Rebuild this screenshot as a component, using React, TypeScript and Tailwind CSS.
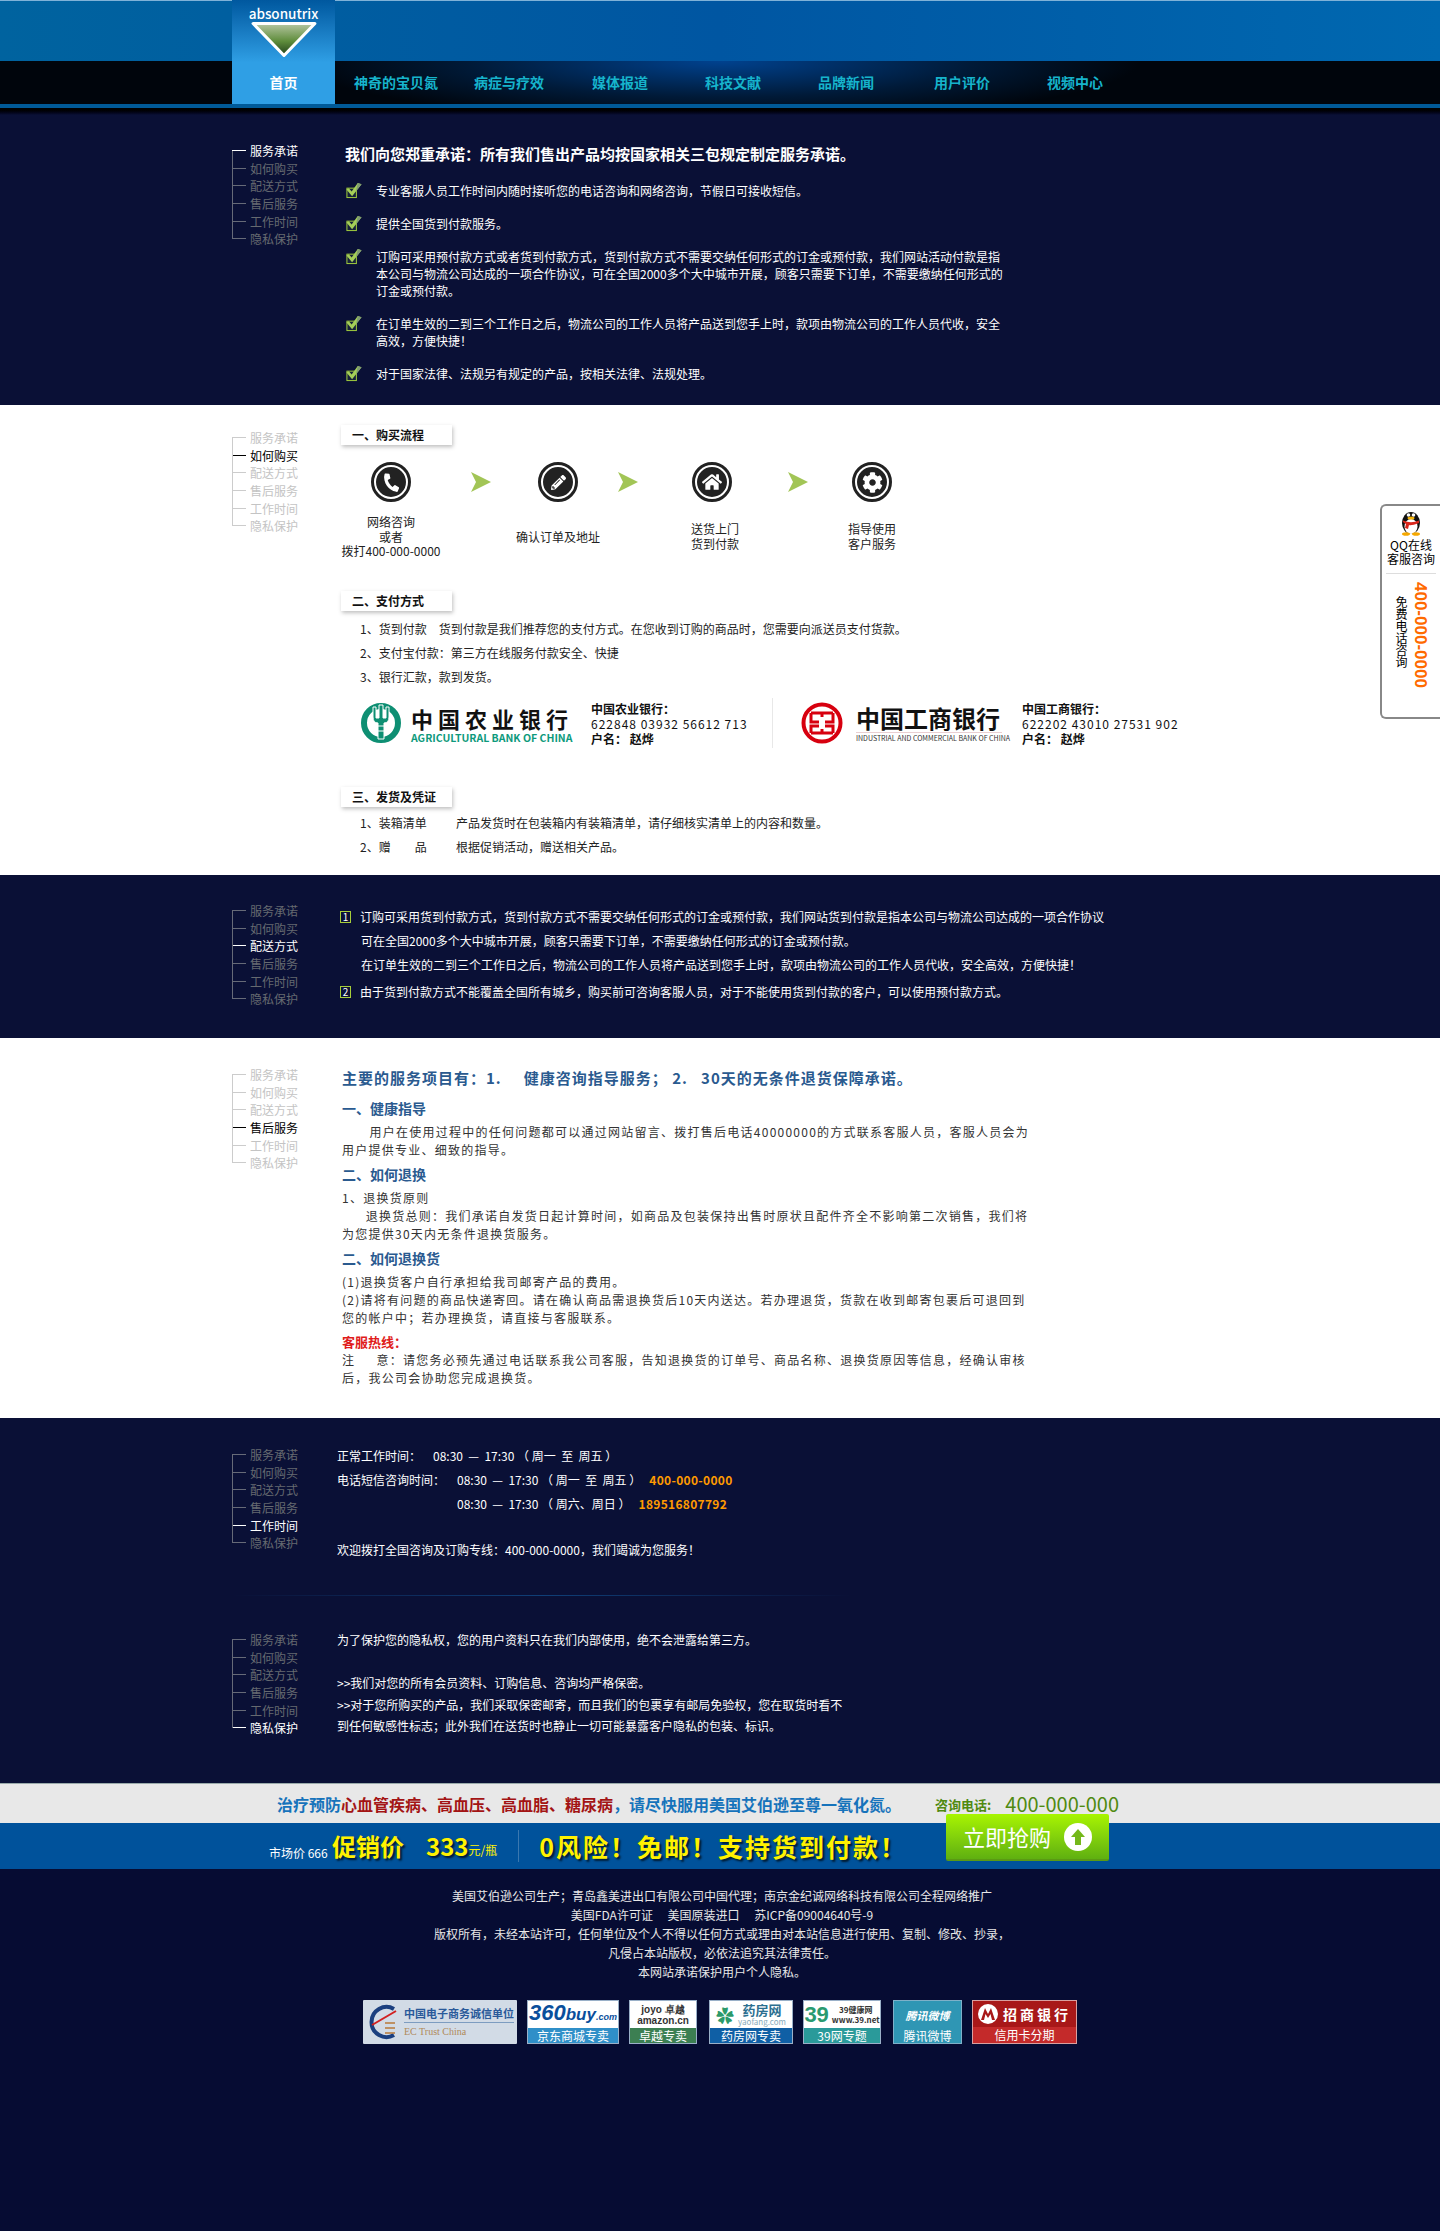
import React from "react";
import { FaCog, FaHome, FaPencilAlt, FaPhone } from "react-icons/fa";

const FONT = "font-['Noto_Sans_CJK_SC','Liberation_Sans',sans-serif]";
const sideItems = ["服务承诺", "如何购买", "配送方式", "售后服务", "工作时间", "隐私保护"];

function SideNav({ active, dark }: { active: number; dark: boolean }) {
  return (
    <div className="relative w-[105px] shrink-0 self-start">
      <span className={`absolute left-0 top-[9px] bottom-[9px] w-px ${dark ? "bg-[#666a78]" : "bg-[#cccccc]"}`} />
      {sideItems.map((t, i) => {
        const on = i === active;
        const color = on ? (dark ? "text-white" : "text-black") : dark ? "text-[#666a70]" : "text-[#c4c4c4]";
        const line = on ? (dark ? "bg-white" : "bg-black") : dark ? "bg-[#666a78]" : "bg-[#cccccc]";
        return (
          <div key={t} className="flex h-[17.6px] items-center">
            <span className={`h-px w-[14px] ${line}`} />
            <span className={`ml-[4px] text-[12px] leading-[17px] ${color}`}>{t}</span>
          </div>
        );
      })}
    </div>
  );
}

function Check() {
  return (
    <svg width="18" height="17" viewBox="0 0 18 18" className="shrink-0">
      <rect x="1.5" y="6.5" width="10" height="10" fill="#16213a" stroke="#a8d63d" />
      <path d="M1 8 L3.5 6.5 L6.5 10 L13 1 L17 2.5 L7 15 Z" fill="#a5cf58" />
      <path d="M13 1 L17 2.5 L11 10 Z" fill="#7f9a73" />
    </svg>
  );
}

function Promise({ lines, className }: { lines: string[]; className: string }) {
  return (
    <div className={`flex gap-[13px] ${className}`}>
      <Check />
      <div className="text-[12px] leading-[17px] text-white">
        {lines.map((l) => (
          <div key={l} className="whitespace-nowrap">{l}</div>
        ))}
      </div>
    </div>
  );
}

function TitleBox({ text, className }: { text: string; className: string }) {
  return (
    <div className={`ml-[1px] flex h-[20px] w-[111px] items-center bg-white pl-[11px] text-[12px] font-bold text-[#111] shadow-[1px_2px_4px_rgba(0,0,0,0.25)] ${className}`}>
      {text}
    </div>
  );
}

function Circle({ icon }: { icon: React.ReactNode }) {
  return (
    <div className="flex h-[40px] w-[40px] shrink-0 items-center justify-center rounded-full border-[2px] border-[#222] bg-[#222] text-white outline-[2px] -outline-offset-[5px] outline-white">
      {icon}
    </div>
  );
}

function Arrow() {
  return (
    <svg width="20" height="20" viewBox="0 0 20 20" className="shrink-0">
      <path d="M0 0 L20 10 L0 20 L5 10 Z" fill="#a2c556" />
    </svg>
  );
}

function Triangle() {
  return (
    <svg width="68" height="38" viewBox="0 0 66 36">
      <defs>
        <linearGradient id="tri" x1="0" y1="0" x2="0" y2="1">
          <stop offset="0" stopColor="#b6c6a2" />
          <stop offset="0.55" stopColor="#5f8d3c" />
          <stop offset="1" stopColor="#20401a" />
        </linearGradient>
      </defs>
      <path d="M3 2 H63 L33 33 Z" fill="url(#tri)" stroke="#fff" strokeWidth="3" strokeLinejoin="round" />
    </svg>
  );
}

function Penguin() {
  return (
    <svg width="22" height="28" viewBox="0 0 22 28">
      <ellipse cx="11" cy="15" rx="9" ry="11" fill="#111" />
      <ellipse cx="11" cy="18.5" rx="6.5" ry="7.5" fill="#fff" />
      <circle cx="8.5" cy="7" r="1.8" fill="#fff" />
      <circle cx="13.5" cy="7" r="1.8" fill="#fff" />
      <ellipse cx="11" cy="10" rx="3.5" ry="1.6" fill="#f5b50a" />
      <path d="M3 12.5 Q11 16 19 12.5 L19 15 Q11 18 9 17 L8 21 L5 20 L6 16 Q4 15 3 14 Z" fill="#d8261c" />
      <ellipse cx="6" cy="26" rx="4" ry="1.8" fill="#f5a800" />
      <ellipse cx="16" cy="26" rx="4" ry="1.8" fill="#f5a800" />
    </svg>
  );
}

function AbcMark() {
  return (
    <svg width="40" height="40" viewBox="0 0 40 40" className="shrink-0">
      <circle cx="20" cy="20" r="17" fill="none" stroke="#0e8f73" strokeWidth="6" />
      <path d="M12 4 V14 Q12 20 17 20 V36 H23 V20 Q28 20 28 14 V4 H25 V15 H22 V2 H18 V15 H15 V4 Z" fill="#0e8f73" stroke="#fff" strokeWidth="1" />
      <path d="M15 23 H25 M15 28 H25" stroke="#fff" strokeWidth="1" />
    </svg>
  );
}

function IcbcMark() {
  return (
    <svg width="42" height="42" viewBox="0 0 42 42" className="shrink-0">
      <circle cx="21" cy="21" r="18.5" fill="#fff" stroke="#d7000f" strokeWidth="4" />
      <path d="M10 11 H32 M10 31 H32 M10 11 V20 H18 M32 11 V20 H24 M10 31 V24 H18 M32 31 V24 H24 M21 11 V15 M21 27 V31" fill="none" stroke="#d7000f" strokeWidth="3" />
    </svg>
  );
}

function BadgeFrame({ w, label, band, children }: { w: string; label: string; band: string; children: React.ReactNode }) {
  return (
    <div className={`flex h-[44px] flex-col border border-[#9ab0c8] bg-white ${w}`}>
      <div className="flex min-h-0 flex-1 items-center justify-center overflow-hidden">{children}</div>
      <div className={`flex h-[15px] items-center justify-center text-[12px] leading-[15px] text-white ${band}`}>{label}</div>
    </div>
  );
}

const P = ({ children, className = "" }: { children: React.ReactNode; className?: string }) => (
  <div className={`whitespace-pre text-[12px] leading-[18px] tracking-[1.25px] text-[#333] ${className}`}>{children}</div>
);
const H = ({ children }: { children: React.ReactNode }) => (
  <div className="my-[6px] h-[18px] text-[14px] leading-[18px] font-bold text-[#2a5a8f]">{children}</div>
);

export default function App() {
  return (
    <div className={`relative min-h-[2231px] w-[1440px] overflow-hidden bg-[#060c33] ${FONT}`}>
      {/* header */}
      <header className="relative h-[115px] bg-gradient-to-b from-black from-[94%] to-[#0a1036]">
        <div className="h-[61px] border-t border-[#7fb2d8] bg-gradient-to-r from-[#00639f] via-[#0056a2] to-[#0068b0]" />
        <div className="flex h-[43px] bg-[radial-gradient(ellipse_420px_60px_at_50%_0%,#00428f,#001a38_60%,#00050c_100%)]">
          <nav className="ml-[335px] flex h-[43px] items-center text-[14px] font-bold text-[#16b4cc]">
            <span className="ml-[19px] w-[120px]">神奇的宝贝氮</span>
            <span className="w-[118px]">病症与疗效</span>
            <span className="w-[113px]">媒体报道</span>
            <span className="w-[113px]">科技文献</span>
            <span className="w-[116px]">品牌新闻</span>
            <span className="w-[113px]">用户评价</span>
            <span>视频中心</span>
          </nav>
        </div>
        <div className="h-[4px] bg-[#005a98]" />
        <div className="absolute left-[232px] top-0 flex h-[104px] w-[103px] flex-col items-center bg-gradient-to-b from-[#00589f] to-[#2f9fe5] to-[60%]">
          <div className="mt-[4px] text-[13.5px] leading-[18px] font-medium text-white">absonutrix</div>
          <div className="mt-[-1px]"><Triangle /></div>
          <div className="mt-[13px] text-[14px] leading-[20px] font-bold text-white">首页</div>
        </div>
      </header>

      {/* promise */}
      <section className="flex h-[290px] bg-[#0a1036] pl-[232px] pt-[27px]">
        <SideNav active={0} dark />
        <div className="ml-[8px]">
          <div className="whitespace-nowrap text-[15px] leading-[24px] font-bold text-white">我们向您郑重承诺：所有我们售出产品均按国家相关三包规定制定服务承诺。</div>
          <Promise className="mt-[16px]" lines={["专业客服人员工作时间内随时接听您的电话咨询和网络咨询，节假日可接收短信。"]} />
          <Promise className="mt-[16px]" lines={["提供全国货到付款服务。"]} />
          <Promise className="mt-[16px]" lines={["订购可采用预付款方式或者货到付款方式，货到付款方式不需要交纳任何形式的订金或预付款，我们网站活动付款是指", "本公司与物流公司达成的一项合作协议，可在全国2000多个大中城市开展，顾客只需要下订单，不需要缴纳任何形式的", "订金或预付款。"]} />
          <Promise className="mt-[16px]" lines={["在订单生效的二到三个工作日之后，物流公司的工作人员将产品送到您手上时，款项由物流公司的工作人员代收，安全", "高效，方便快捷！"]} />
          <Promise className="mt-[16px]" lines={["对于国家法律、法规另有规定的产品，按相关法律、法规处理。"]} />
        </div>
      </section>

      {/* how to buy */}
      <section className="flex h-[470px] bg-white pl-[232px] pt-[24px]">
        <SideNav active={1} dark={false} />
        <div className="ml-[3px] text-[12px] text-[#222]">
          <TitleBox text="一、购买流程" className="-mt-[4px]" />
          <div className="mt-[17px] flex items-start pl-[31px]">
            <Circle icon={<FaPhone size={17} className="rotate-[100deg]" />} />
            <div className="ml-[60px] mt-[10px]"><Arrow /></div>
            <div className="ml-[47px]"><Circle icon={<FaPencilAlt size={15} />} /></div>
            <div className="ml-[40px] mt-[10px]"><Arrow /></div>
            <div className="ml-[54px]"><Circle icon={<FaHome size={20} />} /></div>
            <div className="ml-[56px] mt-[10px]"><Arrow /></div>
            <div className="ml-[44px]"><Circle icon={<FaCog size={21} />} /></div>
          </div>
          <div className="mt-[13px] flex h-[57px] items-start text-center text-[12px] leading-[14.5px]">
            <div className="ml-[1px] w-[100px]">网络咨询<br />或者<br />拨打400-000-0000</div>
            <div className="ml-[67px] mt-[15px] w-[100px]">确认订单及地址</div>
            <div className="ml-[57px] mt-[7px] w-[100px]">送货上门<br />货到付款</div>
            <div className="ml-[57px] mt-[7px] w-[100px]">指导使用<br />客户服务</div>
          </div>
          <TitleBox text="二、支付方式" className="mt-[19px]" />
          <div className="ml-[20px] mt-[6px] leading-[24px]">
            <div>1、货到付款　货到付款是我们推荐您的支付方式。在您收到订购的商品时，您需要向派送员支付货款。</div>
            <div>2、支付宝付款：第三方在线服务付款安全、快捷</div>
            <div>3、银行汇款，款到发货。</div>
          </div>
          <div className="ml-[21px] mt-[9px] flex h-[50px] items-center">
            <AbcMark />
            <div className="ml-[10px] w-[160px]">
              <div className="whitespace-nowrap text-[22px] leading-[28px] font-bold tracking-[5px] text-[#111]">中国农业银行</div>
              <div className="whitespace-nowrap text-[10.5px] leading-[11px] font-bold text-[#0e9a7c]">AGRICULTURAL BANK OF CHINA</div>
            </div>
            <div className="ml-[20px] w-[181px] text-[12px] leading-[15px] font-bold text-[#111]">
              <div>中国农业银行：</div>
              <div className="font-normal tracking-[1px] whitespace-pre">622848 03932 56612 713</div>
              <div>户名： 赵烨</div>
            </div>
            <div className="h-[50px] w-px bg-[#e8e8e8]" />
            <div className="ml-[28px]"><IcbcMark /></div>
            <div className="ml-[13px] w-[146px]">
              <div className="whitespace-nowrap text-[24px] leading-[29px] font-bold text-[#111]">中国工商银行</div>
              <div className="whitespace-nowrap border-t border-[#e9cfd2] text-[7px] leading-[10px] text-[#333]">INDUSTRIAL AND COMMERCIAL BANK OF CHINA</div>
            </div>
            <div className="ml-[20px] w-[181px] shrink-0 text-[12px] leading-[15px] font-bold text-[#111]">
              <div>中国工商银行：</div>
              <div className="font-normal tracking-[1px] whitespace-pre">622202 43010 27531 902</div>
              <div>户名： 赵烨</div>
            </div>
          </div>
          <TitleBox text="三、发货及凭证" className="mt-[39px]" />
          <div className="ml-[20px] mt-[4px] leading-[24px]">
            <div className="flex"><span className="w-[96px]">1、装箱清单</span><span>产品发货时在包装箱内有装箱清单，请仔细核实清单上的内容和数量。</span></div>
            <div className="flex"><span className="w-[96px] whitespace-pre">2、赠　　品</span><span>根据促销活动，赠送相关产品。</span></div>
          </div>
        </div>
      </section>

      {/* delivery */}
      <section className="flex h-[163px] bg-[#0a1036] pl-[232px] pt-[27px]">
        <SideNav active={2} dark />
        <div className="ml-[3px] mt-[3px] text-[12px] text-white">
          <div className="flex h-[24px] items-center whitespace-nowrap">
            <span className="mr-[9px] flex h-[12px] w-[11px] items-center justify-center border border-[#a6cd3a] text-[10px] leading-none">1</span>
            订购可采用货到付款方式，货到付款方式不需要交纳任何形式的订金或预付款，我们网站货到付款是指本公司与物流公司达成的一项合作协议
          </div>
          <div className="ml-[21px] h-[24px] leading-[24px]">可在全国2000多个大中城市开展，顾客只需要下订单，不需要缴纳任何形式的订金或预付款。</div>
          <div className="ml-[21px] h-[24px] leading-[24px]">在订单生效的二到三个工作日之后，物流公司的工作人员将产品送到您手上时，款项由物流公司的工作人员代收，安全高效，方便快捷！</div>
          <div className="mt-[3px] flex h-[24px] items-center whitespace-nowrap">
            <span className="mr-[9px] flex h-[12px] w-[11px] items-center justify-center border border-[#a6cd3a] text-[10px] leading-none">2</span>
            由于货到付款方式不能覆盖全国所有城乡，购买前可咨询客服人员，对于不能使用货到付款的客户，可以使用预付款方式。
          </div>
        </div>
      </section>

      {/* after sales */}
      <section className="flex h-[380px] bg-white pl-[232px] pt-[28px]">
        <SideNav active={3} dark={false} />
        <div className="ml-[5px]">
          <div className="-mt-[1px] h-[26px] whitespace-pre text-[15px] leading-[26px] font-bold tracking-[1px] text-[#2a5a8f]">主要的服务项目有：1.     健康咨询指导服务； 2.   30天的无条件退货保障承诺。</div>
          <div className="pt-[2px]"><H>一、健康指导</H></div>
          <P>{"       用户在使用过程中的任何问题都可以通过网站留言、拨打售后电话40000000的方式联系客服人员，客服人员会为"}</P>
          <P>用户提供专业、细致的指导。</P>
          <H>二、如何退换</H>
          <P>1、退换货原则</P>
          <P>{"      退换货总则：我们承诺自发货日起计算时间，如商品及包装保持出售时原状且配件齐全不影响第二次销售，我们将"}</P>
          <P>为您提供30天内无条件退换货服务。</P>
          <H>二、如何退换货</H>
          <P>(1)退换货客户自行承担给我司邮寄产品的费用。</P>
          <P>(2)请将有问题的商品快递寄回。请在确认商品需退换货后10天内送达。若办理退货，货款在收到邮寄包裹后可退回到</P>
          <P>您的帐户中；若办理换货，请直接与客服联系。</P>
          <div className="mt-[6px] h-[18px] text-[13px] leading-[18px] font-bold text-[#e01b1b]">客服热线：</div>
          <P>{"注　  意：请您务必预先通过电话联系我公司客服，告知退换货的订单号、商品名称、退换货原因等信息，经确认审核"}</P>
          <P>后，我公司会协助您完成退换货。</P>
        </div>
      </section>

      {/* hours + privacy */}
      <section className="flex h-[365px] flex-col bg-[#0a1036] pl-[232px] pt-[28px] text-[12px] text-white">
        <div className="flex h-[149px]">
          <SideNav active={4} dark />
          <div className="-mt-[2px]">
            <div className="flex h-[24px] leading-[24px] whitespace-pre"><span className="w-[96px]">正常工作时间：</span><span>08:30  —  17:30 （ 周一  至  周五 ）</span></div>
            <div className="flex h-[24px] leading-[24px] whitespace-pre"><span className="w-[120px]">电话短信咨询时间：</span><span>08:30  —  17:30 （ 周一  至  周五 ）</span><span className="ml-[8px] font-bold tracking-[0.3px] text-[#ff9a00]">400-000-0000</span></div>
            <div className="flex h-[24px] pl-[120px] leading-[24px] whitespace-pre"><span>08:30  —  17:30 （ 周六、周日 ）</span><span className="ml-[8px] font-bold tracking-[0.3px] text-[#ff9a00]">189516807792</span></div>
            <div className="mt-[22px] h-[24px] leading-[24px] whitespace-pre">欢迎拨打全国咨询及订购专线：400-000-0000，我们竭诚为您服务！</div>
          </div>
        </div>
        <div className="h-px w-[620px] bg-gradient-to-r from-transparent via-[#0f3f78] to-transparent" />
        <div className="mt-[35px] flex h-[152px]">
          <SideNav active={5} dark />
          <div className="-mt-[2px] leading-[21.5px]">
            <div>为了保护您的隐私权，您的用户资料只在我们内部使用，绝不会泄露给第三方。</div>
            <div className="mt-[21.5px]">&gt;&gt;我们对您的所有会员资料、订购信息、咨询均严格保密。</div>
            <div>&gt;&gt;对于您所购买的产品，我们采取保密邮寄，而且我们的包裹享有邮局免验权，您在取货时看不</div>
            <div>到任何敏感性标志；此外我们在送货时也静止一切可能暴露客户隐私的包装、标识。</div>
          </div>
        </div>
      </section>

      {/* banner */}
      <section className="relative">
        <div className="flex h-[40px] items-center border-t border-[#9aa] bg-[#e8e8e8] pl-[277px]">
          <div className="whitespace-nowrap text-[16px] font-bold text-[#1673bb]">
            治疗预防<span className="text-[#a31414]">心血管疾病、高血压、高血脂、糖尿病</span>，请尽快服用美国艾伯逊至尊一氧化氮。
          </div>
          <div className="ml-[34px] mt-[2px] text-[13px] font-bold text-[#4f8a10]">咨询电话:</div>
          <div className="ml-[14px] text-[20px] text-[#4f8a10]">400-000-000</div>
        </div>
        <div className="flex h-[46px] items-center bg-[#00529b] pl-[269px] font-bold text-[#fff200] [text-shadow:2px_2px_2px_rgba(0,0,0,0.7)]">
          <span className="mt-[14px] w-[63px] text-[12px] font-normal text-white [text-shadow:none]">市场价 666</span>
          <span className="text-[24px]">促销价</span>
          <span className="ml-[22px] text-[24px]">333</span>
          <span className="mt-[8px] text-[12px] font-normal [text-shadow:none]">元/瓶</span>
          <span className="ml-[21px] h-[32px] w-px bg-[#3a78b0]" />
          <span className="ml-[20px] whitespace-nowrap text-[25px] leading-[32px] tracking-[2px]">0风险！免邮！支持货到付款！</span>
        </div>
        <div className="absolute left-[946px] top-[31px] flex h-[47px] w-[163px] items-center rounded-[2px] border-b-2 border-[#5a9a14] bg-gradient-to-b from-[#a8f500] to-[#5fb010] pl-[17px] text-[22px] text-white">
          <span>立即抢购</span>
          <span className="ml-[13px] flex h-[28px] w-[28px] items-center justify-center rounded-full bg-white">
            <svg width="14" height="16" viewBox="0 0 14 16"><path d="M7 0 L14 8 H10 V16 H4 V8 H0 Z" fill="#74b81a" /></svg>
          </span>
        </div>
      </section>

      {/* footer */}
      <footer className="pt-[17px] text-center text-[12px] leading-[19px] text-[#e8e8e8]">
        <div className="pl-[4px]">
          <div>美国艾伯逊公司生产；青岛鑫美进出口有限公司中国代理；南京金纪诚网络科技有限公司全程网络推广</div>
          <div className="whitespace-pre">美国FDA许可证　 美国原装进口　 苏ICP备09004640号-9</div>
          <div>版权所有，未经本站许可，任何单位及个人不得以任何方式或理由对本站信息进行使用、复制、修改、抄录，</div>
          <div>凡侵占本站版权，必依法追究其法律责任。</div>
          <div>本网站承诺保护用户个人隐私。</div>
        </div>
        <div className="mt-[19px] flex pl-[363px] text-left">
          <div className="flex h-[44px] w-[154px] items-center rounded-[1px] bg-[#d2dbe6]">
            <svg width="34" height="38" viewBox="0 0 34 38" className="ml-[5px] shrink-0">
              <path d="M26 6 A15 15 0 1 0 26 32" fill="none" stroke="#1b3f7f" strokeWidth="4" />
              <path d="M4 22 L28 8" stroke="#d12020" strokeWidth="2" />
              <path d="M17 20 H27 M17 25 H27 M17 30 H27" stroke="#b87a3a" strokeWidth="1.6" />
            </svg>
            <div className="ml-[2px] font-['Liberation_Serif','Noto_Sans_CJK_SC',serif]">
              <div className="whitespace-nowrap border-b border-[#7d9cc0] text-[11px] leading-[15px] font-bold text-[#2a5a9a]">中国电子商务诚信单位</div>
              <div className="mt-[3px] text-[10px] leading-[12px] text-[#b08a5a]">EC Trust China</div>
            </div>
          </div>
          <BadgeFrame w="ml-[10px] w-[92px]" label="京东商城专卖" band="bg-[#2f8fc8]">
            <span className="whitespace-nowrap font-['Liberation_Sans',sans-serif] text-[22px] leading-[26px] font-bold italic text-[#0a4f9c]">360<span className="text-[17px]">buy</span><span className="text-[9px]">.com</span></span>
          </BadgeFrame>
          <BadgeFrame w="ml-[10px] w-[68px]" label="卓越专卖" band="bg-[#3c7f52]">
            <div className="text-center font-['Liberation_Sans',sans-serif] text-[10px] leading-[11px] font-bold text-[#333]">joyo 卓越<br />amazon.cn</div>
          </BadgeFrame>
          <BadgeFrame w="ml-[12px] w-[84px]" label="药房网专卖" band="bg-[#0f5fa5]">
            <span className="mr-[4px] text-[18px] leading-[20px] text-[#2c9a6a]">✿</span>
            <div className="text-center text-[13px] leading-[14px] font-bold text-[#2c6f90]">药房网<div className="text-[8px] leading-[9px] font-normal text-[#8ab]">yaofang.com</div></div>
          </BadgeFrame>
          <BadgeFrame w="ml-[10px] w-[78px]" label="39网专题" band="bg-[#2a9a9a]">
            <span className="mr-[3px] font-['Liberation_Sans',sans-serif] text-[22px] leading-[26px] font-bold text-[#2a9a70]">39</span>
            <div className="text-center text-[8px] leading-[10px] font-bold text-[#333]">39健康网<br />www.39.net</div>
          </BadgeFrame>
          <div className="ml-[12px] flex h-[44px] w-[69px] flex-col border border-[#7fb0c8] bg-[#2f96b4] text-white">
            <div className="flex flex-1 items-center justify-center text-[11px] italic leading-[14px] font-bold">腾讯微博</div>
            <div className="h-[15px] text-center text-[12px] leading-[15px]">腾讯微博</div>
          </div>
          <div className="ml-[10px] flex h-[44px] w-[105px] flex-col border border-[#d8a0a0] bg-[#a81818] text-white">
            <div className="flex flex-1 items-center text-[14px] leading-[18px] font-bold tracking-[3px]">
              <svg width="22" height="22" viewBox="0 0 22 22" className="mx-[4px] shrink-0">
                <circle cx="11" cy="11" r="10" fill="#fff" />
                <path d="M4 17 L8 5 L11 11 L14 5 L18 17 H15 L13.5 11 L11 15 L8.5 11 L7 17 Z" fill="#a81818" />
              </svg>
              招商银行
            </div>
            <div className="h-[16px] bg-[#c42a2a] text-center text-[12px] leading-[16px]">信用卡分期</div>
          </div>
        </div>
      </footer>

      {/* floating service */}
      <aside className="absolute right-0 top-[504px] h-[215px] w-[60px] rounded-l-[6px] border-y-2 border-l-2 border-[#888] bg-white text-black">
        <div className="mt-[2px] flex justify-center"><Penguin /></div>
        <div className="mt-[2px] text-center text-[12px] leading-[14px] whitespace-nowrap">QQ在线<br />客服咨询</div>
        <div className="mx-[4px] mt-[7px] h-px bg-[#ddd]" />
        <div className="flex h-[120px] items-start">
          <div className="ml-[13px] mt-[22px] text-[12px] leading-[13px] [writing-mode:vertical-rl]">免费电话咨询</div>
          <div className="ml-[2px] mt-[8px] whitespace-nowrap font-['Liberation_Sans',sans-serif] text-[17px] leading-[20px] font-bold text-[#ff6a00] [writing-mode:vertical-rl]">400-000-0000</div>
        </div>
      </aside>
    </div>
  );
}
